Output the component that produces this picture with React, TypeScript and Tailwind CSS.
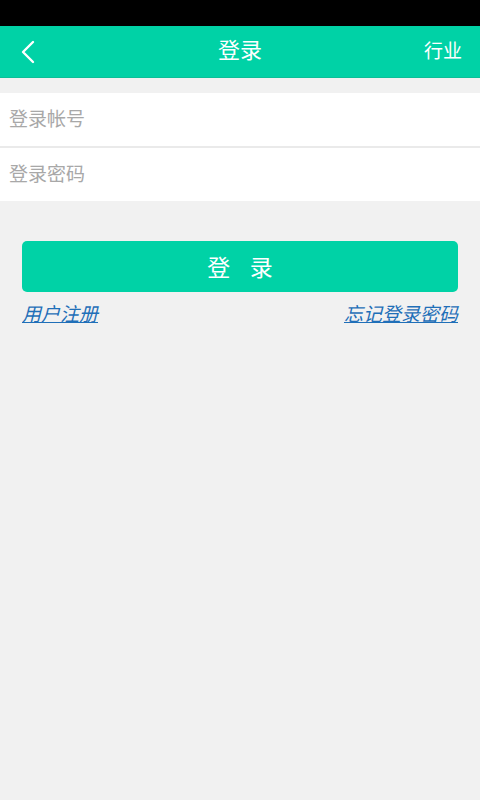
export default function App() {
  return (
    <div
      className="min-h-[800px] w-full bg-[#f1f1f1] flex flex-col"
      style={{ fontFamily: '"Noto Sans CJK SC", "Noto Sans", sans-serif' }}
    >
      {/* status bar */}
      <div className="h-[26px] bg-black" />

      {/* header */}
      <div className="h-[52px] bg-[#00d2a6] border-b border-[#0bbf98] grid grid-cols-[1fr_auto_1fr] items-center px-[20px] text-white">
        <svg width="16" height="24" viewBox="0 0 16 24" fill="none">
          <path d="M13 2 L3 12 L13 22" stroke="white" strokeWidth="2.4" strokeLinecap="round" strokeLinejoin="round" />
        </svg>
        <span className="text-[22px] leading-none -mt-[8px]">登录</span>
        <span className="text-[19px] leading-none justify-self-end -mr-[2px] -mt-[4px]">行业</span>
      </div>

      {/* inputs */}
      <div className="mt-[15px] flex flex-col gap-[2px] bg-[#eaeaea]">
        <div className="h-[53px] bg-white flex items-center px-[9px]">
          <span className="text-[19px] text-[#a8a8a8] -mt-[2px]">登录帐号</span>
        </div>
        <div className="h-[53px] bg-white flex items-center px-[9px]">
          <span className="text-[19px] text-[#a8a8a8] -mt-[2px]">登录密码</span>
        </div>
      </div>

      {/* button */}
      <div className="px-[22px] mt-[40px]">
        <button className="w-full h-[51px] rounded-[5px] bg-[#00d2a6] text-white text-[23px] tracking-[0.85em] pl-[0.85em]">
          登录
        </button>
        <div className="mt-[11px] flex justify-between text-[19px] italic underline text-[#1f6fb8] leading-none">
          <span>用户注册</span>
          <span>忘记登录密码</span>
        </div>
      </div>
    </div>
  );
}
